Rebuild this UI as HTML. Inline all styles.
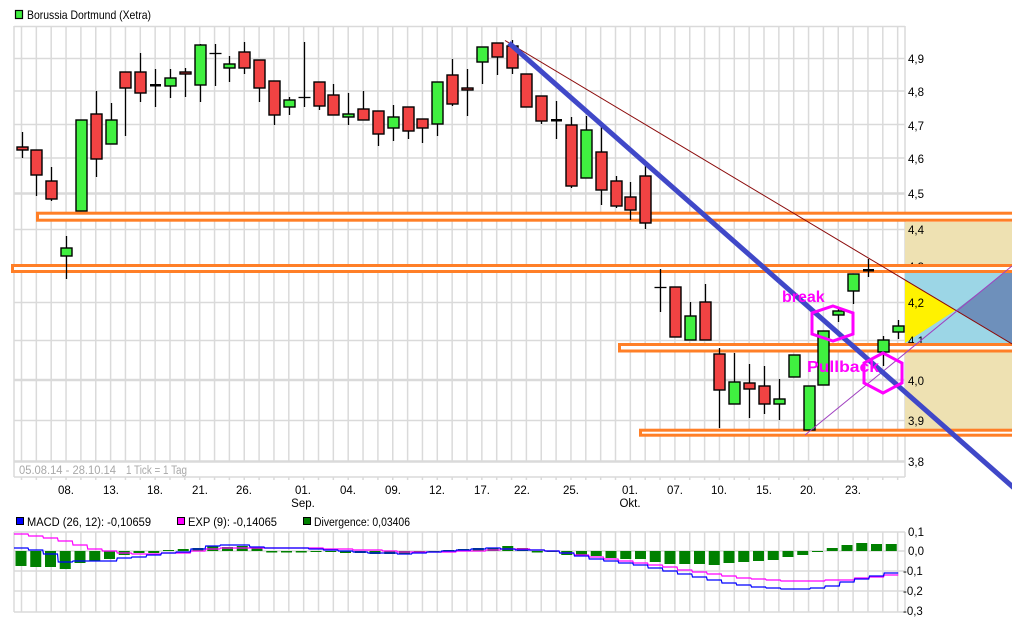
<!DOCTYPE html>
<html><head><meta charset="utf-8"><style>
html,body{margin:0;padding:0;background:#fff;width:1012px;height:623px;overflow:hidden}
svg{display:block;font-family:"Liberation Sans",sans-serif}
</style></head><body>
<svg id="s" width="1012" height="623" viewBox="0 0 1012 623" xmlns="http://www.w3.org/2000/svg">
<g id="grid"></g>
<rect x="905" y="222" width="107" height="207" fill="#eee1b2"/>
<rect x="905" y="273" width="107" height="71" fill="#9cd6e6"/>
<polygon points="905,280 956,310 905,343" fill="#fff200"/>
<polygon points="956,310 1012,267 1012,273 1012,344" fill="#6e90bb"/>
<g font-size="11.5" fill="#000">
<text x="908" y="63">4,9</text><text x="908" y="96">4,8</text><text x="908" y="130">4,7</text>
<text x="908" y="163">4,6</text><text x="908" y="198">4,5</text><text x="908" y="234">4,4</text>
<text x="908" y="271">4,3</text><text x="908" y="307">4,2</text><text x="908" y="345">4,1</text>
<text x="908" y="385">4,0</text><text x="908" y="425">3,9</text><text x="908" y="466">3,8</text>
</g>
<g fill="#fff" stroke="#ff7f27" stroke-width="3">
<rect x="37.5" y="213.2" width="990" height="7"/>
<rect x="12.5" y="265.5" width="1010" height="6"/>
<rect x="619.5" y="344.5" width="400" height="6.5"/>
<rect x="640.5" y="430.2" width="400" height="5"/>
</g>
<g id="candles"></g>
<line x1="505" y1="40.5" x2="1012" y2="344" stroke="#8b0a0a" stroke-width="1"/>
<line x1="805" y1="435" x2="1012" y2="266" stroke="#a040c0" stroke-width="1"/>
<line x1="509" y1="43" x2="1014" y2="488" stroke="#4048c8" stroke-width="5"/>
<g fill="none" stroke="#ff00ff" stroke-width="3">
<polygon points="833,306 853,313 853,334 833,341 812,334 812,313"/>
<polygon points="883,353 902,363 902,383 883,393 864,383 864,363"/>
</g>
<g font-weight="bold" font-size="16" fill="#ff00ff">
<text x="782" y="302">break</text>
<text x="807" y="372" textLength="72" lengthAdjust="spacingAndGlyphs">Pullback</text>
</g>
<rect x="15.5" y="10.5" width="7" height="8" fill="#40f040" stroke="#000" stroke-width="1.2"/>
<text x="27" y="19" font-size="12" textLength="124" lengthAdjust="spacingAndGlyphs">Borussia Dortmund (Xetra)</text>
<text x="19" y="474" font-size="11.5" fill="#a8a8a8" textLength="97" lengthAdjust="spacingAndGlyphs">05.08.14 - 28.10.14</text>
<text x="126" y="474" font-size="11.5" fill="#a8a8a8" textLength="61" lengthAdjust="spacingAndGlyphs">1 Tick = 1 Tag</text>
<g font-size="11.5" text-anchor="middle">
<text x="66" y="494">08.</text><text x="111" y="494">13.</text><text x="155" y="494">18.</text>
<text x="200" y="494">21.</text><text x="244" y="494">26.</text><text x="303" y="494">01.</text>
<text x="303" y="507">Sep.</text><text x="348" y="494">04.</text><text x="393" y="494">09.</text>
<text x="437" y="494">12.</text><text x="482" y="494">17.</text><text x="522" y="494">22.</text>
<text x="571" y="494">25.</text><text x="630" y="494">01.</text><text x="630" y="507">Okt.</text>
<text x="675" y="494">07.</text><text x="719" y="494">10.</text><text x="764" y="494">15.</text>
<text x="808" y="494">20.</text><text x="853" y="494">23.</text>
</g>
<g font-size="11.5">
<rect x="16.5" y="517.5" width="7" height="7" fill="#0000ff" stroke="#000"/>
<text x="27" y="526" textLength="124" lengthAdjust="spacingAndGlyphs">MACD (26, 12): -0,10659</text>
<rect x="177.5" y="517.5" width="7" height="7" fill="#ff00ff" stroke="#000"/>
<text x="188" y="526" textLength="89" lengthAdjust="spacingAndGlyphs">EXP (9): -0,14065</text>
<rect x="303.5" y="517.5" width="7" height="7" fill="#008000" stroke="#000"/>
<text x="314" y="526" textLength="96" lengthAdjust="spacingAndGlyphs">Divergence: 0,03406</text>
</g>
<g font-size="11.5">
<text x="908" y="536">0,1</text><text x="908" y="555">0,0</text><text x="903" y="575">-0,1</text>
<text x="903" y="595">-0,2</text><text x="903" y="615">-0,3</text>
</g>
<g id="macd"></g>
</svg>
<script>
(function(){
var NS='http://www.w3.org/2000/svg';
function el(p,t,a){var e=document.createElementNS(NS,t);for(var k in a)e.setAttribute(k,a[k]);p.appendChild(e);return e;}
var G=document.getElementById('grid'),C=document.getElementById('candles'),M=document.getElementById('macd');
var gc='#dadada';
function X(i){return 21.5+14.85*i;}
for(var i=0;i<60;i++){var x=X(i);
 el(G,'line',{x1:x,y1:26,x2:x,y2:462,stroke:gc,'stroke-width':1.5});
 el(G,'line',{x1:x,y1:477,x2:x,y2:480,stroke:gc,'stroke-width':1.5});
 el(G,'line',{x1:x,y1:532,x2:x,y2:612,stroke:gc,'stroke-width':1.5});}
[14,905].forEach(function(x){el(G,'line',{x1:x,y1:26,x2:x,y2:477,stroke:gc,'stroke-width':1.5});el(G,'line',{x1:x,y1:532,x2:x,y2:612,stroke:gc,'stroke-width':1.5});});
[26.5,58.5,91,124.5,158,193.5,229.5,266,302.5,340.5,380,420.5,461.5,477].forEach(function(y){el(G,'line',{x1:14,y1:y,x2:905,y2:y,stroke:gc,'stroke-width':y==193.5||y==380||y==461.5?2.5:1.5});});
[532,551,571,591,612].forEach(function(y){el(G,'line',{x1:14,y1:y,x2:905,y2:y,stroke:gc,'stroke-width':1.5});});
var d=[[147,150,132,158,'r'],[150,175,150,196,'r'],[181,199,167,201,'r'],[248,256,236,279,'g'],[120,211,120,211,'g'],
[114,159,91,177,'r'],[120,144,103,144,'g'],[72,88,72,136,'r'],[72,93,53,102,'r'],[84,86,69,107,'k'],
[78,86,69,98,'g'],[72,74,68,97,'r'],[45,85,44,102,'g'],[53,53,44,86,'d'],[64,68,56,82,'g'],
[52,68,42,74,'r'],[60,88,60,102,'r'],[81,115,81,125,'r'],[100,107,97,115,'g'],[97,97,42,107,'d'],
[82,106,82,110,'r'],[95,115,84,115,'r'],[114,117,93,125,'g'],[109,120,91,120,'r'],[111,134,111,146,'r'],
[117,128,105,141,'g'],[107,131,107,139,'r'],[119,128,119,143,'r'],[82,124,82,136,'g'],[75,104,59,106,'r'],
[88,90,69,116,'r'],[47,62,47,84,'g'],[43,57,43,75,'r'],[46,68,40,74,'r'],[74,107,74,107,'r'],
[96,121,96,124,'r'],[119,120,101,139,'k'],[125,186,117,188,'r'],[130,178,116,178,'g'],[152,190,127,205,'r'],
[181,206,176,208,'r'],[197,210,182,220,'r'],[176,223,165,229,'r'],[287,287,269,312,'d'],[287,337,287,337,'r'],
[316,340,302,340,'g'],[302,340,284,340,'r'],[354,390,348,428,'r'],[382,404,353,404,'g'],[383,389,364,418,'r'],
[386,404,366,414,'r'],[399,404,379,420,'g'],[355,377,355,377,'g'],[386,430,386,430,'g'],[331,385,331,385,'g'],
[311,315,307,322,'g'],[274,291,274,304,'g'],[269,271,259,277,'k'],[340,352,336,366,'g'],[326,332,320,339,'g']];
d.forEach(function(c,i){var x=Math.round(X(i))+0.5;
 el(C,'line',{x1:x,y1:c[2],x2:x,y2:c[3],stroke:'#000','stroke-width':1.3});
 if(c[4]=='d'){el(C,'line',{x1:x-6,y1:c[0]+.5,x2:x+6,y2:c[0]+.5,stroke:'#000','stroke-width':1.3});}
 else if(c[4]=='k'){el(C,'rect',{x:x-5.5,y:c[0],width:11,height:Math.max(c[1]-c[0],2.5),fill:'#000'});}
 else el(C,'rect',{x:x-5.5,y:c[0],width:11,height:Math.max(c[1]-c[0],2),fill:c[4]=='r'?'#f24343':'#40f040',stroke:'#000','stroke-width':1.4});
});
var h=[-15,-16,-16,-18,-12,-10,-8,-4,-2,-2,1,2,3,5,4,5,4,0,0,0,-1,-1,-2,-2,-3,-3,-3,-2,-1,1,2,3,3,5,3,0,-1,-4,-4,-5,-7,-8,-8,-11,-13,-13,-13,-14,-12,-11,-10,-9,-6,-4,-1,3,6,8,7,7];
var mb=[548,550,554,562,561,561,561,558,557,555,553,552,549,546,545,545,547,548,548,548,549,550,551,552,553,553,554,553,552,551,550,549,548,549,550,550,551,553,556,559,561,563,565,568,571,574,577,580,583,585,587,588,589,589,588,586,582,579,576,573];
var mp=[534,536,538,541,545,549,551,553,554,554,553,553,551,549,548,548,548,548,548,548,548,549,549,550,550,551,552,552,552,552,551,551,550,549,549,550,551,553,555,557,559,561,563,565,567,570,572,574,576,578,579,580,581,581,581,580,580,578,577,575];
function XM(i){return 21+14.75*i;}
h.forEach(function(v,i){var x=XM(i);var hh=Math.abs(v)<1?1.5:Math.abs(v);
 el(M,'rect',{x:x-5.5,y:v>0?551-v:551,width:11,height:hh,fill:'#008000'});});
function pl(a,col){var p='';a.forEach(function(y,i){var x=XM(i);p+=(i?' L':'M')+(x-7)+' '+y+' L'+(x+7)+' '+y;});el(M,'path',{d:p,fill:'none',stroke:col,'stroke-width':1.2});}
pl(mp,'#ff00ff');pl(mb,'#0000ff');
})();
</script>
</body></html>
